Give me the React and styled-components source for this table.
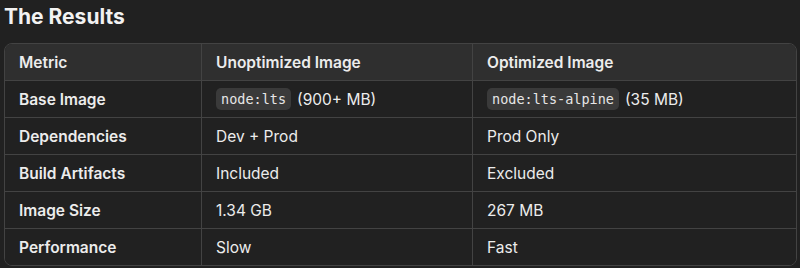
import React from 'react';
import styled, { createGlobalStyle } from 'styled-components';

const GlobalStyle = createGlobalStyle`
  body {
    margin: 0;
    background: #212121;
    font-family: Inter, "Noto Sans", sans-serif;
    color: #ececec;
  }
`;

const Page = styled.div`
  padding: 0 3px 0 4px;
`;

const Title = styled.h2`
  margin: 0 0 10px;
  font-size: 21px;
  font-weight: 700;
  line-height: 33px;
  color: #f2f2f2;
`;

// Table built on a grid, three columns
const Table = styled.div`
  display: grid;
  grid-template-columns: 196px 271px 1fr;
  border: 1px solid #434343;
  border-radius: 8px;
  overflow: hidden;
`;

const Cell = styled.div`
  display: flex;
  align-items: center;
  gap: 6px;
  height: 36px;
  padding: 0 14px;
  font-size: 15.5px;
  font-weight: ${(p) => (p.$bold ? 600 : 400)};
  background: ${(p) => (p.$head ? '#2f2f2f' : '#212121')};
  border-bottom: ${(p) => (p.$last ? 'none' : '1px solid #434343')};
  border-left: ${(p) => (p.$first ? 'none' : '1px solid #434343')};
  white-space: nowrap;
`;

const Code = styled.code`
  font-family: "DejaVu Sans Mono", "Liberation Mono", monospace;
  font-size: 13.5px;
  background: #3a3a3a;
  border-radius: 5px;
  padding: 3px 5px;
  color: #e6e6e6;
`;

const headers = ['Metric', 'Unoptimized Image', 'Optimized Image'];

const rows = [
  ['Base Image', <><Code>node:lts</Code>(900+ MB)</>, <><Code>node:lts-alpine</Code>(35 MB)</>],
  ['Dependencies', 'Dev + Prod', 'Prod Only'],
  ['Build Artifacts', 'Included', 'Excluded'],
  ['Image Size', '1.34 GB', '267 MB'],
  ['Performance', 'Slow', 'Fast'],
];

const App = () => {
  return (
    <Page>
      <GlobalStyle />
      <Title>The Results</Title>
      <Table>
        {headers.map((h, i) => (
          <Cell key={h} $head $bold $first={i === 0}>{h}</Cell>
        ))}
        {rows.map((row, r) =>
          row.map((c, i) => (
            <Cell
              key={`${r}-${i}`}
              $bold={i === 0}
              $first={i === 0}
              $last={r === rows.length - 1}
            >
              {c}
            </Cell>
          ))
        )}
      </Table>
    </Page>
  );
};

export default App;
